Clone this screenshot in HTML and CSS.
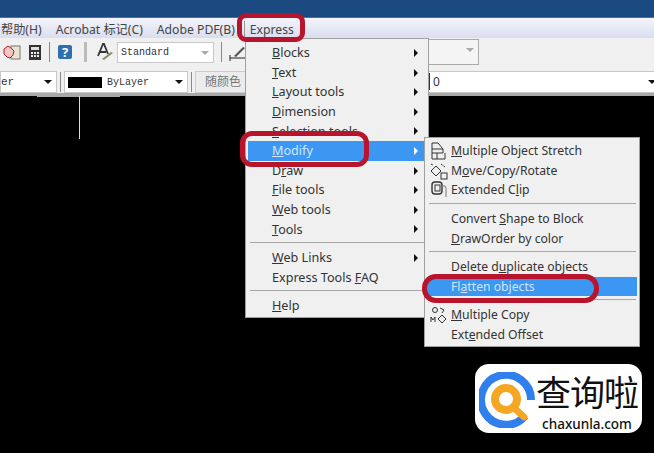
FILE: index.html
```html
<!DOCTYPE html>
<html lang="zh">
<head>
    <meta charset="UTF-8">
    <title>Express</title>
    <link rel="stylesheet" href="styles.css">
</head>
<body>

<div class="titlebar"></div>

<div class="menubar">
    <span class="menubar-item">帮助(H)</span>
    <span class="menubar-item">Acrobat 标记(C)</span>
    <span class="menubar-item">Adobe PDF(B)</span>
    <span class="menubar-item menubar-express">Express</span>
</div>

<div class="toolbar toolbar-top">
    <svg class="tool-icon" width="18" height="17" viewBox="0 0 18 17"><rect x="8" y="2" width="9" height="13" fill="#e8e4d0" stroke="#777"/><path d="M1 5l4-3 3 2 3 3-1 4-3 3-3-1-3-3z" fill="#f6c4c4" stroke="#b02020"/></svg>
    <svg class="tool-icon" width="14" height="17" viewBox="0 0 14 17"><rect x="1" y="1" width="12" height="15" fill="#333"/><rect x="3" y="3" width="8" height="3" fill="#ddd"/><path d="M3 8h2v2H3zM6 8h2v2H6zM9 8h2v2H9zM3 11h2v2H3zM6 11h2v2H6zM9 11h2v2H9z" fill="#eee"/></svg>
    <span class="tool-sep"></span>
    <svg class="tool-icon" width="16" height="16" viewBox="0 0 16 16"><rect x="1" y="1" width="14" height="14" rx="2" fill="#2f6fb0"/><text x="8" y="13" text-anchor="middle" class="help-q">?</text></svg>
    <span class="tool-sep tool-sep-wide"></span>
    <svg class="tool-icon tool-a" width="18" height="20" viewBox="0 0 18 20"><path d="M2 14L7 2h1l4 10M4 10h6" fill="none" stroke="#333" stroke-width="1.8"/><path d="M6 17l9-7 2 1-9 7z" fill="#8a8a6a"/></svg>
    <div class="combo combo-style">Standard<span class="combo-arrow combo-arrow-grey"></span></div>
    <span class="tool-sep"></span>
    <svg class="tool-icon" width="18" height="17" viewBox="0 0 18 17"><path d="M1 14h16M1 11v6M17 11v6" stroke="#222" fill="none"/><path d="M5 12l9-9 2 1-9 9z" fill="#555"/></svg>
    <div class="combo combo-dim"><span class="combo-arrow combo-arrow-grey"></span></div>
</div>

<div class="toolbar toolbar-bottom">
    <div class="combo combo-layer">er<span class="combo-arrow"></span></div>
    <span class="tool-sep"></span>
    <div class="combo combo-color"><span class="swatch"></span>ByLayer<span class="combo-arrow"></span></div>
    <span class="tool-sep"></span>
    <div class="color-btn">随颜色</div>
    <div class="combo combo-plot"><span class="plot-value">0</span><span class="combo-arrow"></span></div>
</div>

<div class="canvas">
    <div class="ruler"></div>
    <div class="crosshair"></div>
</div>

<div class="menu menu-express">
    <div class="item"><span><u>B</u>locks</span><i class="arrow"></i></div>
    <div class="item"><span><u>T</u>ext</span><i class="arrow"></i></div>
    <div class="item"><span><u>L</u>ayout tools</span><i class="arrow"></i></div>
    <div class="item"><span><u>D</u>imension</span><i class="arrow"></i></div>
    <div class="item"><span><u>S</u>election tools</span><i class="arrow"></i></div>
    <div class="item active"><span><u>M</u>odify</span><i class="arrow"></i></div>
    <div class="item"><span>D<u>r</u>aw</span><i class="arrow"></i></div>
    <div class="item"><span><u>F</u>ile tools</span><i class="arrow"></i></div>
    <div class="item"><span><u>W</u>eb tools</span><i class="arrow"></i></div>
    <div class="item"><span><u>T</u>ools</span><i class="arrow"></i></div>
    <div class="sep"></div>
    <div class="item"><span><u>W</u>eb Links</span><i class="arrow"></i></div>
    <div class="item"><span>Express Tools <u>F</u>AQ</span></div>
    <div class="sep"></div>
    <div class="item"><span><u>H</u>elp</span></div>
</div>

<div class="menu menu-modify">
    <div class="item">
        <svg class="item-icon" width="18" height="18" viewBox="0 0 18 18"><path d="M2 1h6l5 6v4H2zM2 7h11M2 11v6h13v-6M7 11v6" fill="none" stroke="#333"/></svg>
        <span><u>M</u>ultiple Object Stretch</span>
    </div>
    <div class="item">
        <svg class="item-icon" width="18" height="18" viewBox="0 0 18 18"><path d="M6 4l5 5-5 5-5-5z" fill="none" stroke="#333"/><rect x="11" y="11" width="6" height="6" fill="none" stroke="#333"/><path d="M1 2l2 1M11 2l4 3" stroke="#333" stroke-dasharray="2 1"/></svg>
        <span>M<u>o</u>ve/Copy/Rotate</span>
    </div>
    <div class="item">
        <svg class="item-icon" width="18" height="18" viewBox="0 0 18 18"><rect x="2" y="1" width="10" height="12" rx="3" fill="none" stroke="#333" stroke-width="1.4"/><rect x="5" y="4" width="5" height="6" fill="none" stroke="#333"/><path d="M12 5h3l1 2v9" fill="none" stroke="#777"/></svg>
        <span>Extended C<u>l</u>ip</span>
    </div>
    <div class="sep"></div>
    <div class="item"><span>Convert <u>S</u>hape to Block</span></div>
    <div class="item"><span><u>D</u>rawOrder by color</span></div>
    <div class="sep"></div>
    <div class="item"><span>Delete d<u>u</u>plicate objects</span></div>
    <div class="item active"><span>Fl<u>a</u>tten objects</span></div>
    <div class="sep"></div>
    <div class="item">
        <svg class="item-icon" width="18" height="18" viewBox="0 0 18 18"><circle cx="5" cy="4" r="2.5" fill="none" stroke="#333"/><path d="M10 2l4 2-2 3" fill="none" stroke="#333"/><path d="M1 16v-5l2 3 2-3v5" fill="none" stroke="#333"/><path d="M12 9l4 4-4 4-4-4z" fill="none" stroke="#333"/></svg>
        <span><u>M</u>ultiple Copy</span>
    </div>
    <div class="item"><span>Ext<u>e</u>nded Offset</span></div>
</div>

<!-- red marks drawn over the screenshot -->
<div class="mark mark-express"></div>
<div class="mark mark-modify"></div>
<div class="mark mark-flatten"></div>

<div class="watermark">
    <svg class="watermark-logo" width="56" height="56" viewBox="0 0 56 56">
        <path d="M46 44A25 25 0 1 1 52 28" fill="none" stroke="#2f80ed" stroke-width="8"/>
        <circle cx="27" cy="27" r="11" fill="none" stroke="#f5a623" stroke-width="8"/>
        <path d="M34 35l11 10" stroke="#f5a623" stroke-width="7" stroke-linecap="round"/>
    </svg>
    <div class="watermark-text">
        <div class="watermark-cn">查询啦</div>
        <div class="watermark-url">chaxunla.com</div>
    </div>
</div>

</body>
</html>
```

FILE: styles.css
```css
* {
    box-sizing: border-box;
}
html, body {
    height: 100%;
    margin: 0;
    overflow: hidden;
}
body {
    background-color: #000;
    font-family: "Noto Sans", "Noto Sans CJK SC", sans-serif;
    font-size: 12.6px;
    color: #333;
    position: relative;
}
.titlebar {
    height: 18px;
    background-color: #1b4a80;
    border-bottom: 1px solid #4f7191;
}
.menubar {
    height: 20px;
    display: flex;
    align-items: center;
    padding-top: 2px;
    background-image: linear-gradient(180deg, #f4f4fa 0%, #d9def0 100%);
    font-size: 12.2px;
    color: #444;
}
.menubar-item {
    margin-left: 14px;
    white-space: nowrap;
}
.menubar-item:first-child {
    margin-left: 1px;
}
.menubar-express {
    margin-left: 9px;
    padding-left: 5px;
    border-left: 1px solid #999;
}
.toolbar {
    display: flex;
    align-items: center;
    background-color: #f0f0f0;
}
.toolbar-top {
    height: 28px;
    padding-left: 3px;
    gap: 7px;
}
.toolbar-bottom {
    height: 30px;
    padding-top: 4px;
    border-bottom: 3px solid #a8a8a8;
    gap: 3px;
}
.tool-icon {
    flex: none;
}
.help-q {
    font-size: 13px;
    font-weight: bold;
    fill: #fff;
}
.tool-sep {
    width: 1px;
    height: 20px;
    background-color: #888;
    flex: none;
}
.tool-sep-wide {
    width: 3px;
    margin-left: 4px;
    background-color: #bbb;
}
.tool-a {
    margin-left: 2px;
    margin-right: -4px;
}
.combo {
    position: relative;
    height: 22px;
    display: flex;
    align-items: center;
    flex: none;
    background-color: #fff;
    border: 1px solid #c8c8c8;
    font-family: "Liberation Mono", monospace;
    font-size: 10px;
    color: #333;
    padding-left: 3px;
}
.combo-arrow {
    position: absolute;
    right: 4px;
    top: 8px;
    border-left: 4px solid transparent;
    border-right: 4px solid transparent;
    border-top: 4px solid #111;
}
.combo-arrow-grey {
    border-top-color: #aaa;
}
.combo-style {
    width: 97px;
    height: 21px;
}
.combo-dim {
    width: 228px;
    margin-left: -3px;
    height: 26px;
    background-color: #f4f4f4;
    border-color: #aaa;
}
.combo-layer {
    width: 57px;
    padding-left: 0;
    font-size: 11px;
}
.combo-color {
    width: 124px;
    padding-top: 2px;
}
.swatch {
    width: 34px;
    height: 11px;
    margin: 0 5px 0 0;
    background-color: #000;
}
.color-btn {
    width: 56px;
    height: 22px;
    line-height: 20px;
    background-color: #ececec;
    border: 1px solid #ccc;
    color: #777;
    text-align: center;
    font-size: 12px;
    flex: none;
}
.combo-plot {
    width: 403px;
    margin-left: 4px;
    padding-left: 176px;
    font-family: "Noto Sans", sans-serif;
    font-size: 12px;
}
.plot-value {
    border-left: 1px solid #333;
    padding-left: 3px;
    margin-left: -6px;
}
.canvas {
    position: relative;
    height: 357px;
}
.ruler {
    position: absolute;
    left: 37px;
    top: 0;
    width: 83px;
    height: 1px;
    background-color: #aaa;
}
.crosshair {
    position: absolute;
    left: 79px;
    top: 0;
    width: 1px;
    height: 43px;
    background-color: #ddd;
}
.menu {
    position: absolute;
    background-color: #f0f0f0;
    border: 1px solid #a0a0a0;
    color: #333;
}
.menu-express {
    left: 245px;
    top: 38px;
    width: 184px;
    height: 280px;
    padding: 4px 2px 0;
}
.menu-modify {
    left: 424px;
    top: 137px;
    width: 216px;
    height: 210px;
    padding: 3px 2px 0;
    font-size: 12.2px;
}
.item {
    position: relative;
    height: 19.6px;
    display: flex;
    align-items: center;
    padding-left: 24px;
    white-space: nowrap;
}
.item.active {
    background-color: #3c97f2;
    color: #cfe6fb;
}
.arrow {
    position: absolute;
    right: 8px;
    top: 6px;
    border-top: 4px solid transparent;
    border-bottom: 4px solid transparent;
    border-left: 4px solid #111;
}
.item.active .arrow {
    border-left-color: #fff;
}
.item-icon {
    position: absolute;
    left: 3px;
    top: 1px;
}
.sep {
    height: 1px;
    margin: 3px 1px 5px 2px;
    background-color: #a8a8a8;
}
.mark {
    position: absolute;
    border: 5px solid #b8142c;
    border-radius: 9px;
}
.mark-express {
    left: 237px;
    top: 13px;
    width: 68px;
    height: 29px;
}
.mark-modify {
    left: 240px;
    top: 131px;
    width: 129px;
    height: 36px;
    border-radius: 12px;
}
.mark-flatten {
    left: 422px;
    top: 274px;
    width: 177px;
    height: 29px;
    border-radius: 14px;
}
.watermark {
    position: absolute;
    left: 475px;
    top: 364px;
    width: 167px;
    height: 69px;
    background-color: #fff;
    border-radius: 14px;
    display: flex;
    align-items: center;
    overflow: hidden;
}
.watermark-logo {
    flex: none;
    margin: 2px 0 0 4px;
}
.watermark-text {
    margin-left: 1px;
    text-align: center;
    color: #111;
}
.watermark-cn {
    font-family: "Noto Sans CJK SC", sans-serif;
    font-size: 35px;
    line-height: 51px;
    white-space: nowrap;
    letter-spacing: -1px;
}
.watermark-url {
    font-size: 13.5px;
    line-height: 16px;
    font-weight: 500;
}
```
